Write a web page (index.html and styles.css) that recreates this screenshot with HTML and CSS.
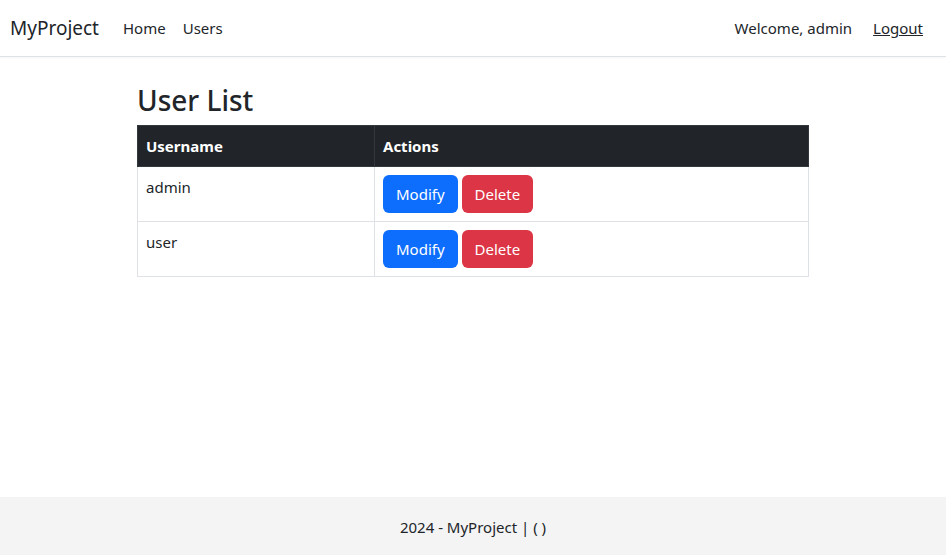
FILE: index.html
```html
<!DOCTYPE html>
<html lang="en">
<head>
<meta charset="utf-8">
<title>User List - MyProject</title>
<link rel="stylesheet" href="styles.css">
</head>
<body>
<header class="navbar">
  <div class="nav-left">
    <a class="brand" href="#">MyProject</a>
    <nav class="nav-links">
      <a href="#">Home</a>
      <a href="#">Users</a>
    </nav>
  </div>
  <div class="nav-right">
    <span class="welcome">Welcome, admin</span>
    <a class="logout" href="#">Logout</a>
  </div>
</header>
<main class="container">
  <h2 class="title">User List</h2>
  <table class="users">
    <thead>
      <tr><th class="col-name">Username</th><th>Actions</th></tr>
    </thead>
    <tbody>
      <tr>
        <td>admin</td>
        <td><div class="actions"><button class="btn btn-primary">Modify</button><button class="btn btn-danger">Delete</button></div></td>
      </tr>
      <tr>
        <td>user</td>
        <td><div class="actions"><button class="btn btn-primary">Modify</button><button class="btn btn-danger">Delete</button></div></td>
      </tr>
    </tbody>
  </table>
</main>
<footer class="footer">2024 - MyProject | ( )</footer>
</body>
</html>
```
FILE: styles.css
```css
* { box-sizing: border-box; }
html, body { height: 100%; }
body {
  margin: 0;
  font-family: "Noto Sans", "Open Sans", sans-serif;
  font-size: 15px;
  line-height: 24px;
  color: #212529;
  background: #fff;
  display: flex;
  flex-direction: column;
}
a { color: inherit; text-decoration: none; }
.navbar {
  height: 57px;
  display: flex;
  align-items: center;
  justify-content: space-between;
  padding: 0 23px 0 10px;
  border-bottom: 1px solid #dee2e6;
  box-shadow: 0 1px 2px rgba(0,0,0,0.04);
}
.nav-left { display: flex; align-items: center; }
.brand { font-size: 19px; line-height: 30px; margin-right: 24px; color: #212529; }
.nav-links { display: flex; gap: 17px; }
.nav-links a { color: #212529; }
.nav-right { display: flex; align-items: center; gap: 21px; }
.logout { text-decoration: underline; }
.container {
  width: 672px;
  margin: 0 auto;
  flex: 1;
  padding-top: 24px;
}
.title {
  margin: 0 0 6px;
  font-size: 28px;
  font-weight: 500;
  line-height: 38px;
}
.users {
  width: 100%;
  border-collapse: collapse;
}
.users th, .users td {
  border: 1px solid #dee2e6;
  padding: 8px;
  text-align: left;
  vertical-align: top;
}
.users th {
  background: #212529;
  color: #fff;
  font-weight: 700;
  border-color: #32383e;
}
.col-name { width: 237px; }
.actions { display: flex; gap: 4px; }
.btn {
  font: inherit;
  color: #fff;
  border: 1px solid transparent;
  border-radius: 6px;
  padding: 6px 12px;
  line-height: 24px;
}
.btn-primary { background: #0d6efd; }
.btn-danger { background: #dc3545; }
.footer {
  background: #f4f4f4;
  height: 58px;
  display: flex;
  align-items: center;
  justify-content: center;
  color: #212529;
  padding-top: 2px;
}
```
